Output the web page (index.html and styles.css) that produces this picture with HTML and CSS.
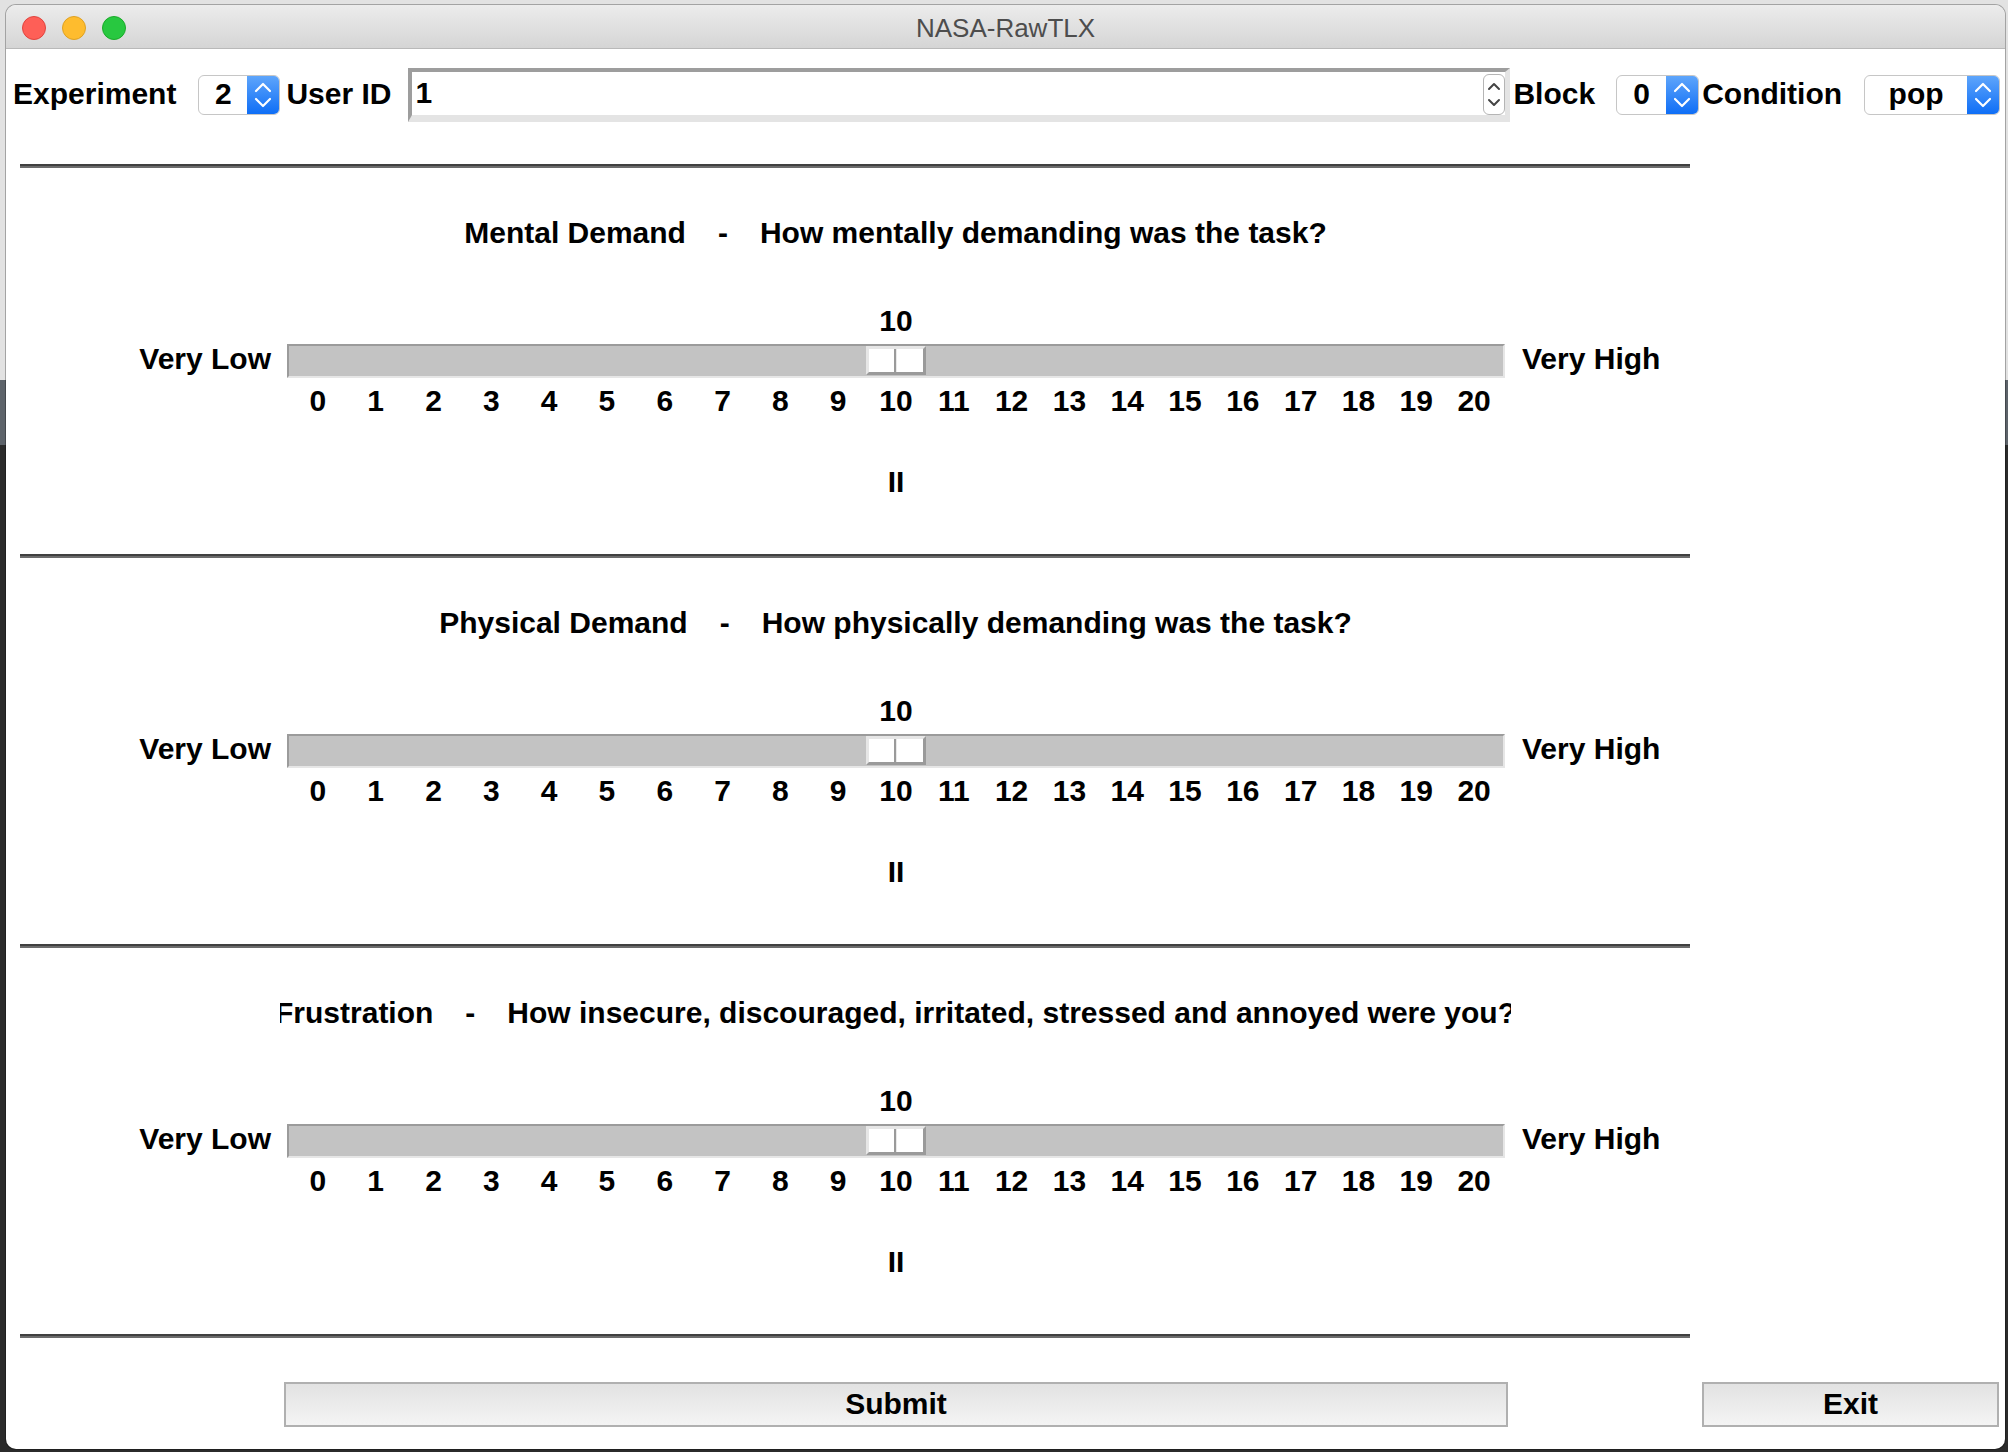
FILE: index.html
```html
<!DOCTYPE html>
<html>
<head>
<meta charset="utf-8">
<title>NASA-RawTLX</title>
<link rel="stylesheet" href="styles.css">
</head>
<body>
<div class="window">
  <div class="titlebar">
    <div class="lights">
      <span class="light red"></span>
      <span class="light yellow"></span>
      <span class="light green"></span>
    </div>
    <div class="title">NASA-RawTLX</div>
    <div></div>
  </div>
  <div class="content">
    <div class="toprow">
      <span class="lbl">Experiment</span>
      <div class="spin s-exp"><span class="spin-val">2</span><span class="stepper blue"><svg width="32" height="38" viewBox="0 0 32 38"><path d="M9 15 L16 8 L23 15 M9 23 L16 30 L23 23" fill="none" stroke="#fff" stroke-width="2.2" stroke-linecap="round" stroke-linejoin="round"/></svg></span></div>
      <span class="lbl uid">User ID</span>
      <div class="entry"><span class="entry-val">1</span><span class="stepper plain"><svg width="20" height="39" viewBox="0 0 20 39"><path d="M5 14 L10 9 L15 14 M5 25 L10 30 L15 25" fill="none" stroke="#444" stroke-width="2" stroke-linecap="round" stroke-linejoin="round"/></svg></span></div>
      <span class="lbl tight">Block</span>
      <div class="spin s-block"><span class="spin-val">0</span><span class="stepper blue"><svg width="32" height="38" viewBox="0 0 32 38"><path d="M9 15 L16 8 L23 15 M9 23 L16 30 L23 23" fill="none" stroke="#fff" stroke-width="2.2" stroke-linecap="round" stroke-linejoin="round"/></svg></span></div>
      <span class="lbl tight">Condition</span>
      <div class="spin s-cond"><span class="spin-val">pop</span><span class="stepper blue"><svg width="32" height="38" viewBox="0 0 32 38"><path d="M9 15 L16 8 L23 15 M9 23 L16 30 L23 23" fill="none" stroke="#fff" stroke-width="2.2" stroke-linecap="round" stroke-linejoin="round"/></svg></span></div>
    </div>

    <div class="sep"></div>

    <section class="dim">
      <div class="heading"><span>Mental Demand</span><span>-</span><span>How mentally demanding was the task?</span></div>
      <div class="srow value"><div class="track"><span style="grid-column: 11">10</span></div></div>
      <div class="srow slider">
        <span class="end lo">Very Low</span>
        <div class="trough"><div class="handle" style="grid-column: 11"></div></div>
        <span class="end hi">Very High</span>
      </div>
      <div class="srow ticks"><div class="track"><span>0</span><span>1</span><span>2</span><span>3</span><span>4</span><span>5</span><span>6</span><span>7</span><span>8</span><span>9</span><span>10</span><span>11</span><span>12</span><span>13</span><span>14</span><span>15</span><span>16</span><span>17</span><span>18</span><span>19</span><span>20</span></div></div>
      <div class="srow pause"><div class="track"><span style="grid-column: 11">II</span></div></div>
    </section>

    <div class="sep"></div>

    <section class="dim">
      <div class="heading"><span>Physical Demand</span><span>-</span><span>How physically demanding was the task?</span></div>
      <div class="srow value"><div class="track"><span style="grid-column: 11">10</span></div></div>
      <div class="srow slider">
        <span class="end lo">Very Low</span>
        <div class="trough"><div class="handle" style="grid-column: 11"></div></div>
        <span class="end hi">Very High</span>
      </div>
      <div class="srow ticks"><div class="track"><span>0</span><span>1</span><span>2</span><span>3</span><span>4</span><span>5</span><span>6</span><span>7</span><span>8</span><span>9</span><span>10</span><span>11</span><span>12</span><span>13</span><span>14</span><span>15</span><span>16</span><span>17</span><span>18</span><span>19</span><span>20</span></div></div>
      <div class="srow pause"><div class="track"><span style="grid-column: 11">II</span></div></div>
    </section>

    <div class="sep"></div>

    <section class="dim">
      <div class="heading"><span>Frustration</span><span>-</span><span>How insecure, discouraged, irritated, stressed and annoyed were you?</span></div>
      <div class="srow value"><div class="track"><span style="grid-column: 11">10</span></div></div>
      <div class="srow slider">
        <span class="end lo">Very Low</span>
        <div class="trough"><div class="handle" style="grid-column: 11"></div></div>
        <span class="end hi">Very High</span>
      </div>
      <div class="srow ticks"><div class="track"><span>0</span><span>1</span><span>2</span><span>3</span><span>4</span><span>5</span><span>6</span><span>7</span><span>8</span><span>9</span><span>10</span><span>11</span><span>12</span><span>13</span><span>14</span><span>15</span><span>16</span><span>17</span><span>18</span><span>19</span><span>20</span></div></div>
      <div class="srow pause"><div class="track"><span style="grid-column: 11">II</span></div></div>
    </section>

    <div class="sep"></div>

    <div class="footer">
      <button class="btn submit">Submit</button>
      <button class="btn exit">Exit</button>
    </div>
  </div>
</div>
</body>
</html>
```

FILE: styles.css
```css
html, body {
  margin: 0;
  padding: 0;
}

body {
  width: 2008px;
  height: 1452px;
  overflow: hidden;
  background: linear-gradient(to bottom, #e2e2e2 0, #e2e2e2 380px, #5d636a 380px, #5d636a 445px, #2b2b2b 445px);
  font-family: "Liberation Sans", Arial, sans-serif;
}

.window {
  margin: 5px 0 0 6px;
  width: 1999px;
  height: 1444px;
  background: #fff;
  border-radius: 10px;
  overflow: hidden;
  box-shadow: 0 0 0 1px rgba(0, 0, 0, 0.28);
}

.titlebar {
  box-sizing: border-box;
  height: 44px;
  padding-top: 3px;
  display: grid;
  grid-template-columns: 1fr auto 1fr;
  align-items: center;
  background: linear-gradient(#ececec, #d5d5d5);
  border-bottom: 1px solid #b9b9b9;
}

.lights {
  display: flex;
  gap: 16px;
  padding-left: 16px;
}

.light {
  box-sizing: border-box;
  width: 24px;
  height: 24px;
  border-radius: 50%;
}

.red { background: #fe5f57; border: 1px solid #e0443e; }
.yellow { background: #febc2e; border: 1px solid #dea123; }
.green { background: #28c840; border: 1px solid #1aab29; }

.title {
  font-size: 26px;
  color: #4d4d4d;
  line-height: 30px;
}

.content {
  font-weight: bold;
  font-size: 30px;
  line-height: 36px;
  color: #000;
}

/* top row */
.toprow {
  display: flex;
  align-items: center;
  height: 54px;
  margin-top: 19px;
  padding-left: 7px;
}

.lbl {
  white-space: nowrap;
  margin-bottom: 2px;
}

.uid { margin-left: 6px; }
.tight { margin-left: 3px; }

.spin {
  box-sizing: border-box;
  height: 40px;
  display: flex;
  border: 1px solid #c6c6c6;
  border-radius: 6px;
  background: #fff;
  overflow: hidden;
}

.spin-val {
  flex: 1;
  text-align: center;
  line-height: 36px;
}

.stepper.blue {
  width: 32px;
  display: flex;
  background: linear-gradient(#5ea5fb, #0f6ef6);
}

.s-exp { margin-left: 22px; width: 82px; }
.s-block { margin-left: 21px; width: 83px; }
.s-cond { margin-left: 22px; width: 136px; }

.entry {
  box-sizing: border-box;
  width: 1102px;
  height: 54px;
  margin-left: 17px;
  display: flex;
  align-items: flex-start;
  border-style: solid;
  border-width: 4px 5px 7px 4px;
  border-color: #9d9d9d #e4e4e4 #e4e4e4 #9d9d9d;
  background: #fff;
}

.entry-val {
  flex: 1;
  padding-left: 3px;
  margin-top: 3px;
}

.stepper.plain {
  box-sizing: border-box;
  width: 22px;
  height: 41px;
  margin-top: 2px;
  border: 1px solid #b5b5b5;
  border-radius: 6px;
  display: flex;
}

/* separators */
.sep {
  box-sizing: border-box;
  margin-left: 14px;
  width: 1670px;
  height: 4px;
  border-top: 2px solid #404040;
  border-bottom: 2px solid #6c6c6c;
}

.toprow + .sep {
  margin-top: 42px;
}

/* dimension sections */
.dim {
  box-sizing: border-box;
  height: 386px;
  padding-top: 47px;
}

.heading {
  margin-left: 274px;
  width: 1231px;
  display: flex;
  justify-content: center;
  gap: 32px;
  overflow: hidden;
  white-space: nowrap;
}

.heading span {
  flex-shrink: 0;
}

.srow {
  display: grid;
  grid-template-columns: 265px 1218px auto;
  column-gap: 16px;
}

.srow.value { margin-top: 52px; }
.srow.slider { margin-top: 5px; height: 34px; align-items: start; }
.srow.ticks { margin-top: 5px; }
.srow.pause { margin-top: 45px; }

.track {
  grid-column: 2;
  display: grid;
  grid-template-columns: repeat(21, minmax(0, 1fr));
  padding: 0 2px;
  text-align: center;
  white-space: nowrap;
}

.end {
  white-space: nowrap;
  margin-top: -3px;
}

.end.lo { text-align: right; }
.end.hi { margin-left: 1px; }

.trough {
  box-sizing: border-box;
  height: 34px;
  border-style: solid;
  border-width: 2px;
  border-color: #9b9b9b #e6e6e6 #e6e6e6 #9b9b9b;
  background: #c3c3c3;
  display: grid;
  grid-template-columns: repeat(21, minmax(0, 1fr));
  align-items: start;
}

.handle {
  box-sizing: border-box;
  justify-self: center;
  width: 60px;
  height: 29px;
  border-style: solid;
  border-width: 3px;
  border-color: #e6e6e6 #9a9a9a #9a9a9a #e6e6e6;
  background: linear-gradient(to right, #fff 0, #fff calc(50% - 2px), #9a9a9a calc(50% - 2px), #9a9a9a 50%, #e9e9e9 50%, #e9e9e9 calc(50% + 1px), #fff calc(50% + 1px), #fff 100%);
}

/* footer */
.footer {
  display: flex;
  margin-top: 44px;
}

.btn {
  box-sizing: border-box;
  height: 45px;
  padding: 0 0 2px;
  border: 2px solid #b0b0b0;
  border-radius: 0;
  background: linear-gradient(#e2e2e2, #f4f4f4);
  font-family: "Liberation Sans", Arial, sans-serif;
  font-weight: bold;
  font-size: 30px;
  line-height: 39px;
  color: #000;
}

.submit { margin-left: 278px; width: 1224px; }
.exit { margin-left: 194px; width: 297px; }
```
